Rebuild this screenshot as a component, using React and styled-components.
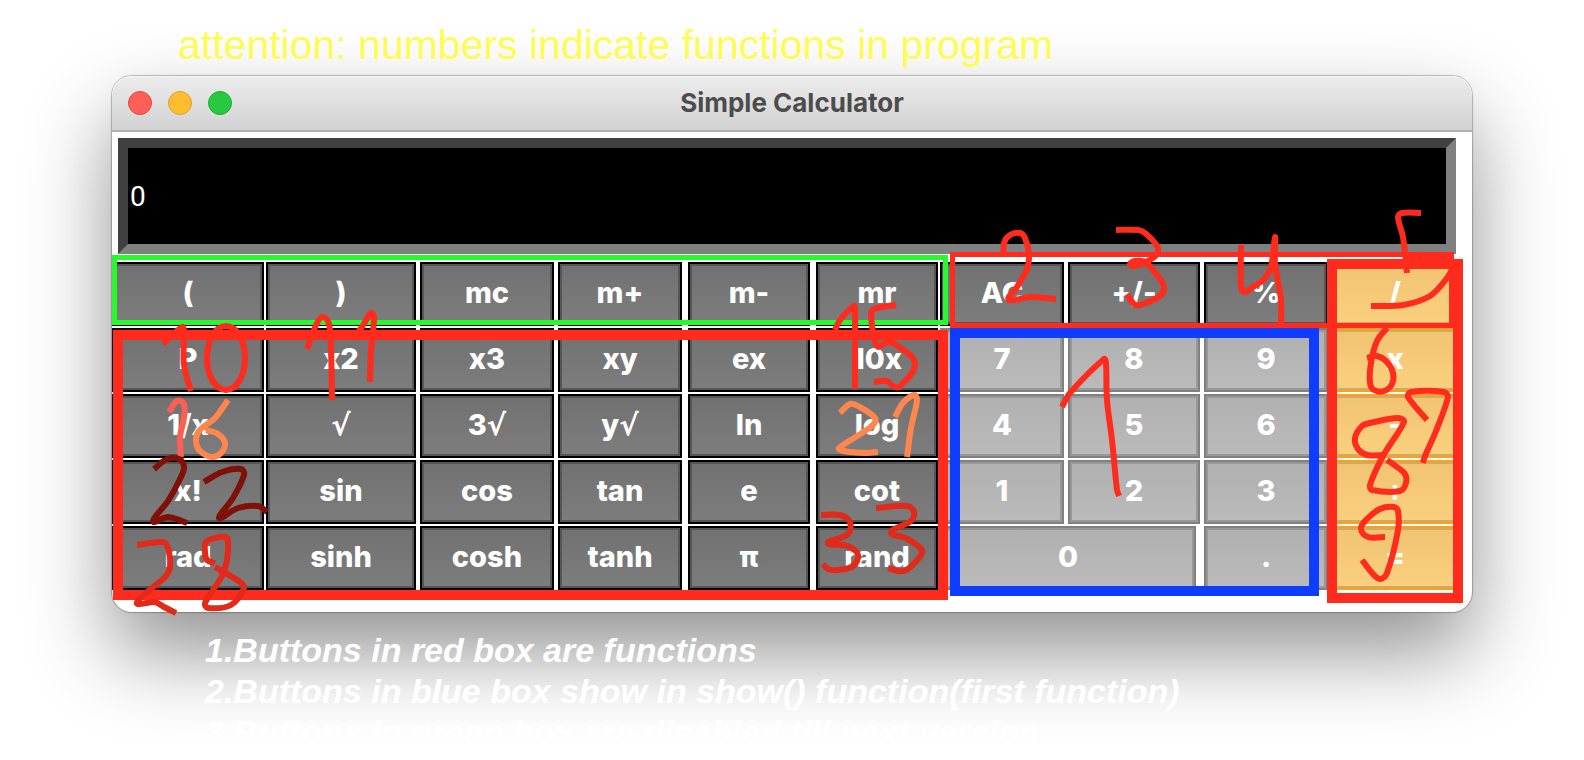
import React from "react";
import styled, { createGlobalStyle, css } from "styled-components";

const GlobalStyle = createGlobalStyle`
  * { box-sizing: border-box; }
  html, body { margin: 0; background: #fff; }
`;

const Page = styled.main`
  padding: 24px 112px 0;
  min-height: 100vh;
  overflow: hidden;
  font-family: Inter, "Liberation Sans", sans-serif;
`;

const Headline = styled.h1`
  position: relative;
  z-index: 1;
  margin: 0;
  padding-left: 66px;
  height: 52px;
  font: 400 41px/42px "Liberation Sans", Helvetica, Arial, sans-serif;
  color: #fffb55;
  white-space: nowrap;
`;

const Window = styled.section`
  position: relative;
  border-radius: 20px;
  background: #fff;
  box-shadow: 0 0 1px 1px rgba(0, 0, 0, 0.26), 0 40px 84px rgba(0, 0, 0, 0.43);
`;

const TitleBar = styled.header`
  display: grid;
  grid-template-columns: 1fr auto 1fr;
  align-items: center;
  height: 56px;
  padding: 0 16px;
  border-radius: 20px 20px 0 0;
  border-bottom: 2px solid #b0b0b0;
  background: linear-gradient(#ececec, #d2d2d2);
  box-shadow: inset 0 1px #f6f6f6;
`;

const Lights = styled.div`
  display: flex;
  gap: 16px;
`;

const Light = styled.button`
  width: 24px;
  height: 24px;
  padding: 0;
  border: 1px solid ${(p) => p.$edge};
  border-radius: 50%;
  background: ${(p) => p.$fill};
`;

const Title = styled.h2`
  margin: 0;
  font-size: 26px;
  line-height: 32px;
  font-weight: 700;
  color: #4c4c4c;
`;

const Body = styled.div`
  padding: 6px 0 22px;
`;

const Display = styled.input`
  display: block;
  width: calc(100% - 22px);
  height: 116px;
  margin: 0 16px 8px 6px;
  padding: 0 2px;
  border: 10px solid;
  border-color: #404040 #808080 #808080 #404040;
  border-radius: 0;
  outline: none;
  background: #000;
  color: #fff;
  font: 400 28px/32px Roboto, sans-serif;
`;

const Keypad = styled.div`
  display: grid;
  grid-template-columns:
    minmax(0, 152fr) minmax(0, 152fr) minmax(0, 134fr) minmax(0, 130fr)
    minmax(0, 126fr) minmax(0, 122fr) minmax(0, 126fr) minmax(0, 134fr)
    minmax(0, 124fr) minmax(0, 130fr);
  grid-auto-rows: 64px;
  gap: 2px;
  padding-right: 12px;
`;

const tones = {
  dark: css`
    border-color: #000;
    background: linear-gradient(#717171, #7d7d7d);
    box-shadow: inset 0 0 0 2px #565656;
  `,
  light: css`
    border-color: #808080;
    background: linear-gradient(#b0b0b0, #bbbbbb);
    box-shadow: inset 0 0 0 2px #989898;
  `,
  orange: css`
    border-color: #fb9f1f;
    background: linear-gradient(#f1c372, #fad07e);
    box-shadow: inset 0 0 0 2px #d2a961;
  `,
};

const Key = styled.button`
  grid-column: span ${(p) => p.$span || 1};
  margin: 0 ${(p) => p.$right || 0}px 0 ${(p) => p.$left || 0}px;
  padding: 0 0 2px;
  border: 2px solid;
  color: #fff;
  font: 800 29px/36px Inter, "DejaVu Sans", sans-serif;
  ${(p) => tones[p.$tone]}
`;

const Radical = styled.span`
  font-family: "DejaVu Sans", sans-serif;
`;

const Notes = styled.div`
  position: relative;
  padding: 18px 0 0 93px;
  font: italic 700 34px/41px "Liberation Sans", Helvetica, Arial, sans-serif;
  color: #fff;
  white-space: nowrap;
`;

const Note = styled.p`
  margin: 0;
`;

const Markup = styled.svg`
  position: absolute;
  inset: 0;
  z-index: 2;
  width: 100%;
  height: 100%;
  overflow: visible;
  pointer-events: none;
`;

const RED = "#ff2b1d";
const BRICK = "#e22a1a";
const MAROON = "#7f1108";
const CORAL = "#fb5f55";
const PEACH = "#ff864c";

const rows = [
  ["(", ")", "mc", "m+", "m-", "mr", "AC", "+/-", "%", "/"],
  ["P", "x2", "x3", "xy", "ex", "10x", "7", "8", "9", "x"],
  ["1/x", "√", "3√", "y√", "ln", "log", "4", "5", "6", "-"],
  ["x!", "sin", "cos", "tan", "e", "cot", "1", "2", "3", "+"],
  ["rad", "sinh", "cosh", "tanh", "π", "rand", "0", ".", "="],
];

const columnMargins = [
  [0, 0], [0, 2], [0, 0], [2, 4], [0, 4], [0, 0], [0, 2], [0, 2], [0, 0], [0, 0],
];

const boxes = [
  { x: 112, y: 255, w: 836, h: 70, t: 5, color: "#26f92c" },
  { x: 113, y: 330, w: 835, h: 270, t: 10, color: RED },
  { x: 1327, y: 259, w: 136, h: 344, t: 10, color: RED },
  { x: 950, y: 252, w: 504, h: 76, t: 5, color: RED },
  { x: 950, y: 328, w: 369, h: 268, t: 10, color: "#0f3dff" },
];

const strokes = [
  [RED, [1004,256, 1004,243, 1010,235, 1020,233, 1025,238, 1029,255, 1027,269, 1017,287, 1009,300, 1030,297, 1056,299]],
  [RED, [1116,230, 1138,230, 1145,233, 1157,246, 1157,254, 1148,261, 1134,266, 1130,264, 1135,261, 1145,262, 1160,279, 1164,288, 1160,296, 1140,305, 1134,304, 1127,294]],
  [RED, [1241,245, 1241,286, 1244,292, 1250,289, 1264,279, 1271,267, 1275,237, 1275,263, 1281,300, 1281,323]],
  [RED, [1421,213, 1402,213, 1398,217, 1403,237, 1407,273]],
  [RED, [1408,259, 1427,257, 1447,260, 1452,267, 1447,278, 1430,296, 1403,305, 1371,306]],
  [RED, [1387,328, 1377,341, 1371,363, 1370,383, 1374,390, 1384,391, 1392,384, 1393,373, 1387,362, 1377,356, 1367,358]],
  [RED, [1427,420, 1408,397, 1411,392, 1444,392, 1448,397, 1436,431, 1425,456, 1423,463]],
  [RED, [1383,455, 1367,455, 1358,449, 1355,438, 1362,426, 1370,423, 1398,418, 1404,422, 1383,456, 1370,485, 1372,490, 1400,491, 1406,483, 1405,474, 1397,467, 1387,460]],
  [RED, [1385,537, 1368,537, 1361,529, 1366,520, 1380,509, 1394,507, 1398,511, 1398,530, 1387,573, 1380,579, 1373,574, 1362,560]],
  [RED, [1062,407, 1070,393, 1104,359, 1106,363, 1107,400, 1112,440, 1117,490, 1119,496]],
  [RED, [163,344, 182,327, 184,332, 184,365, 191,391]],
  [RED, [307,349, 317,323, 323,317, 329,324, 331,350, 332,400]],
  [RED, [352,339, 362,327, 371,313, 374,318, 371,350, 370,382]],
  [CORAL, [169,412, 177,401, 184,404, 184,418, 180,437, 181,457]],
  [PEACH, [228,400, 215,418, 199,431, 196,441, 200,451, 212,457, 221,453, 225,443, 218,434, 206,430]],
  [MAROON, [154,469, 167,459, 179,459, 184,467, 180,479, 168,501, 153,521, 168,517, 187,523]],
  [MAROON, [204,482, 222,472, 241,469, 244,475, 233,498, 219,518, 238,508, 258,506, 267,512]],
  [BRICK, [137,545, 163,542, 168,548, 170,567, 165,577, 137,602, 155,602, 164,607, 176,613]],
  [BRICK, [215,563, 207,560, 205,552, 206,542, 215,538, 225,537, 228,541, 227,560, 222,576, 205,603, 208,608, 231,605, 244,588, 240,582, 215,567]],
  [RED, [835,330, 840,320, 854,306, 855,310, 855,345, 855,389]],
  [RED, [896,305, 874,309, 871,315, 877,346, 888,342, 898,346, 915,364, 899,387, 893,386, 887,381, 874,382]],
  [PEACH, [840,413, 850,404, 858,406, 875,418, 872,426, 839,448, 843,451, 866,453, 878,452]],
  [PEACH, [895,417, 903,403, 914,395, 917,400, 911,428, 907,457]],
  [BRICK, [821,515, 840,515, 850,522, 848,534, 828,543, 848,546, 858,555, 853,566, 838,570, 828,569, 823,564]],
  [BRICK, [876,508, 907,506, 914,512, 911,521, 891,532, 906,538, 922,550, 919,558, 904,571, 888,568]],
];

// Rounds the corners of a polyline with cubic segments through every point.
function curve(flat) {
  const pts = [];
  for (let i = 0; i < flat.length; i += 2) pts.push([flat[i], flat[i + 1]]);
  let d = `M${pts[0][0]} ${pts[0][1]}`;
  for (let i = 0; i < pts.length - 1; i++) {
    const [b, c] = [pts[i], pts[i + 1]];
    const a = pts[i - 1] || b;
    const e = pts[i + 2] || c;
    const len = Math.hypot(c[0] - b[0], c[1] - b[1]);
    const handle = (p, q, dir) => {
      const span = Math.hypot(q[0] - p[0], q[1] - p[1]) || 1;
      const k = Math.min(len / 3, span / 4) * dir;
      return [((q[0] - p[0]) / span) * k, ((q[1] - p[1]) / span) * k];
    };
    const h1 = handle(a, c, 1);
    const h2 = handle(b, e, -1);
    d += `C${b[0] + h1[0]} ${b[1] + h1[1]} ${c[0] + h2[0]} ${c[1] + h2[1]} ${c[0]} ${c[1]}`;
  }
  return d;
}

function toneFor(label, row, col) {
  if (col === rows[row].length - 1) return "orange";
  if (col < 6 || row === 0) return "dark";
  return "light";
}

function KeyLabel({ text }) {
  if (!text.endsWith("√")) return text;
  return (
    <>
      {text.slice(0, -1)}
      <Radical>√</Radical>
    </>
  );
}

export default function App() {
  return (
    <Page>
      <GlobalStyle />
      <Headline>attention: numbers indicate functions in program</Headline>
      <Window>
        <TitleBar>
          <Lights>
            <Light aria-label="Close" $fill="#ff5f57" $edge="#e2463f" />
            <Light aria-label="Minimize" $fill="#febc2e" $edge="#e0a026" />
            <Light aria-label="Zoom" $fill="#28c840" $edge="#1dad2b" />
          </Lights>
          <Title>Simple Calculator</Title>
        </TitleBar>
        <Body>
          <Display aria-label="Result" defaultValue="0" />
          <Keypad>
            {rows.map((row, r) =>
              row.map((label, c) => {
                const wide = label === "0";
                const col = r === 4 && c > 6 ? c + 1 : c;
                const [left, right] = columnMargins[col];
                return (
                  <Key
                    key={`${r}-${c}`}
                    $tone={toneFor(label, r, c)}
                    $span={wide ? 2 : 1}
                    $left={left}
                    $right={wide ? 6 : right}
                  >
                    <KeyLabel text={label} />
                  </Key>
                );
              })
            )}
          </Keypad>
        </Body>
        <Markup viewBox="112 76 1360 536" preserveAspectRatio="none" aria-hidden="true">
          {boxes.map((b) => (
            <rect
              key={`${b.x}-${b.y}`}
              x={b.x + b.t / 2}
              y={b.y + b.t / 2}
              width={b.w - b.t}
              height={b.h - b.t}
              fill="none"
              stroke={b.color}
              strokeWidth={b.t}
            />
          ))}
          {strokes.map(([color, points], i) => (
            <path
              key={i}
              d={curve(points)}
              fill="none"
              stroke={color}
              strokeWidth="6"
              strokeLinejoin="round"
            />
          ))}
          <ellipse cx="226" cy="358" rx="19" ry="32" fill="none" stroke={RED} strokeWidth="6" />
        </Markup>
      </Window>
      <Notes>
        <Note>1.Buttons in red box are functions</Note>
        <Note>2.Buttons in blue box show in show() function(first function)</Note>
        <Note>3.Buttons in green box are disabled till next version</Note>
      </Notes>
    </Page>
  );
}
